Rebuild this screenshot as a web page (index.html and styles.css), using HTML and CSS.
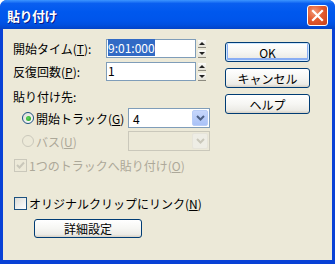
FILE: index.html
```html
<!DOCTYPE html>
<html lang="ja">
<head>
    <meta charset="UTF-8">
    <title>貼り付け</title>
    <link rel="stylesheet" href="styles.css">
</head>
<body>
    <div class="window">
        <div class="titlebar">
            <span class="title">貼り付け</span>
            <div class="close">
                <svg width="13" height="13" viewBox="0 0 13 13">
                    <path d="M2 2 L11 11 M11 2 L2 11" stroke="#fff" stroke-width="2.2" stroke-linecap="square"/>
                </svg>
            </div>
        </div>

        <div class="client">
            <div class="left">
                <div class="field-row first">
                    <span class="field-label">開始タイム(<u>T</u>):</span>
                    <div class="textbox"><span class="selected">9:01:000</span></div>
                    <div class="spin">
                        <span class="spin-btn"><i class="arrow-up"></i></span>
                        <span class="spin-btn"><i class="arrow-down"></i></span>
                    </div>
                </div>
                <div class="field-row second">
                    <span class="field-label">反復回数(<u>P</u>):</span>
                    <div class="textbox">1</div>
                    <div class="spin">
                        <span class="spin-btn"><i class="arrow-up"></i></span>
                        <span class="spin-btn"><i class="arrow-down"></i></span>
                    </div>
                </div>

                <div class="group-label">貼り付け先:</div>

                <div class="radio-row first-radio">
                    <span class="radio checked"></span>
                    <span class="radio-text">開始トラック(<u>G</u>)</span>
                    <div class="combo">
                        <span class="combo-value">4</span>
                        <span class="combo-btn">
                            <svg width="9" height="6" viewBox="0 0 9 6"><path d="M1 1 L4.5 4.5 L8 1" fill="none" stroke="#4d6185" stroke-width="2"/></svg>
                        </span>
                    </div>
                </div>
                <div class="radio-row second-radio disabled">
                    <span class="radio"></span>
                    <span class="radio-text">バス(<u>U</u>)</span>
                    <div class="combo">
                        <span class="combo-value"></span>
                        <span class="combo-btn">
                            <svg width="9" height="6" viewBox="0 0 9 6"><path d="M1 1 L4.5 4.5 L8 1" fill="none" stroke="#c9c7ba" stroke-width="2"/></svg>
                        </span>
                    </div>
                </div>

                <div class="check-row single disabled">
                    <span class="checkbox">
                        <svg width="9" height="9" viewBox="0 0 9 9"><path d="M1 4 L3.5 6.5 L8 1.5" fill="none" stroke="#c9c7ba" stroke-width="2"/></svg>
                    </span>
                    <span class="check-text">1つのトラックへ貼り付け(<u>O</u>)</span>
                </div>

                <div class="check-row link">
                    <span class="checkbox"></span>
                    <span class="check-text">オリジナルクリップにリンク(<u>N</u>)</span>
                </div>

                <div class="detail-row">
                    <button class="btn detail">詳細設定</button>
                </div>
            </div>

            <div class="right">
                <button class="btn default">OK</button>
                <button class="btn">キャンセル</button>
                <button class="btn">ヘルプ</button>
            </div>
        </div>
    </div>
</body>
</html>
```

FILE: styles.css
```css
*{
    margin: 0;
    padding: 0;
    box-sizing: border-box;
}

:root{
    --face: #ece9d8;
    --text: #000;
    --disabled: #aca899;
    --disabledBorder: #cac8bb;
    --xpBorder: #003c74;
    --inputBorder: #7f9db9;
    --frame: #0841d6;
}

body{
    background-color: #fff;
    font-family: "Noto Sans CJK JP", "Noto Sans", sans-serif;
    font-size: 12px;
    color: var(--text);
}

.window{
    width: 335px;
    height: 264px;
    display: flex;
    flex-direction: column;
    background-color: var(--frame);
    border-radius: 7px 7px 0 0;
    overflow: hidden;
}

.titlebar{
    height: 29px;
    flex-shrink: 0;
    display: flex;
    align-items: center;
    justify-content: space-between;
    padding: 0 7px 0 7px;
    background: linear-gradient(to bottom, #3d95ff 0%, #0a5ff0 12%, #0058ee 40%, #0055eb 70%, #0050e0 85%, #0343c8 100%);
}

.title{
    color: #fff;
    font-weight: bold;
    font-size: 13px;
    letter-spacing: -0.5px;
    text-shadow: 1px 1px 0 #0a1883;
    margin-top: 1px;
}

.close{
    width: 21px;
    height: 21px;
    margin-top: 1px;
    border: 1px solid #fff;
    border-radius: 3px;
    display: flex;
    align-items: center;
    justify-content: center;
    background: radial-gradient(circle at 35% 30%, #f29a7a 0%, #e35a2e 45%, #c8401a 100%);
}

.client{
    flex: 1;
    display: flex;
    margin: 0 3px 4px 3px;
    padding-left: 10px;
    background-color: var(--face);
}

.left{
    width: 212px;
    display: flex;
    flex-direction: column;
}

.right{
    width: 85px;
    display: flex;
    flex-direction: column;
    gap: 6px;
    padding-top: 13px;
}

/* text fields */
.field-row{
    display: flex;
    align-items: center;
    height: 19px;
}
.field-row.first{ margin-top: 10px; }
.field-row.second{ margin-top: 4px; }

.field-label{
    width: 93px;
}

.textbox{
    width: 90px;
    height: 19px;
    border: 1px solid var(--inputBorder);
    background-color: #fff;
    padding-left: 1px;
    line-height: 16px;
}

.selected{
    background-color: #316ac5;
    color: #fff;
}

.spin{
    margin-left: 2px;
    width: 8px;
    height: 18px;
    display: flex;
    flex-direction: column;
    gap: 2px;
}

.spin-btn{
    flex: 1;
    display: flex;
    align-items: center;
    justify-content: center;
    background: linear-gradient(to bottom, #fbfbf9, #e3e1d6);
    border-bottom: 1px solid #8d8b80;
}

.arrow-up, .arrow-down{
    width: 0;
    height: 0;
    border-left: 3px solid transparent;
    border-right: 3px solid transparent;
}
.arrow-up{ border-bottom: 3px solid #222; }
.arrow-down{ border-top: 3px solid #222; }

.group-label{
    margin-top: 9px;
    height: 14px;
    line-height: 14px;
}

/* radio rows */
.radio-row{
    display: flex;
    align-items: center;
    height: 20px;
    padding-left: 9px;
}
.first-radio{ margin-top: 4px; }
.second-radio{ margin-top: 3px; }

.radio{
    width: 12px;
    height: 12px;
    border-radius: 50%;
    border: 1px solid #1c5180;
    background: linear-gradient(135deg, #dcdcd7, #fff);
    display: flex;
    align-items: center;
    justify-content: center;
}
.radio.checked::after{
    content: "";
    width: 5px;
    height: 5px;
    border-radius: 50%;
    background: radial-gradient(circle at 40% 40%, #5ed65e, #1a9a1a);
}

.radio-text{
    width: 92px;
    margin-left: 2px;
}

.combo{
    width: 82px;
    height: 20px;
    border: 1px solid var(--inputBorder);
    background-color: #fff;
    display: flex;
    align-items: center;
    justify-content: space-between;
    padding: 1px;
}
.combo-value{
    padding-left: 3px;
}
.combo-btn{
    width: 16px;
    height: 16px;
    border-radius: 2px;
    display: flex;
    align-items: center;
    justify-content: center;
    background: linear-gradient(to bottom, #c6d7fc, #a9c2f7);
    border: 1px solid #b8cdf7;
}

.disabled{
    color: var(--disabled);
}
.disabled .radio{
    border-color: var(--disabledBorder);
    background: var(--face);
}
.disabled .combo{
    border-color: var(--disabledBorder);
    background-color: var(--face);
}
.disabled .combo-btn{
    background: #eeede5;
    border-color: #e6e4da;
}

/* check rows */
.check-row{
    display: flex;
    align-items: center;
    height: 13px;
    padding-left: 1px;
}
.check-row.single{ margin-top: 8px; }
.check-row.link{ margin-top: 25px; }

.checkbox{
    width: 13px;
    height: 13px;
    border: 1px solid #1c5180;
    background: linear-gradient(135deg, #dcdcd7, #fff);
    display: flex;
    align-items: center;
    justify-content: center;
}
.disabled .checkbox{
    border-color: var(--disabledBorder);
    background: var(--face);
}

.check-text{
    margin-left: 2px;
}

/* buttons */
.detail-row{
    margin-top: 9px;
    padding-left: 21px;
}

.btn{
    height: 20px;
    width: 85px;
    border: 1px solid var(--xpBorder);
    border-radius: 3px;
    background: linear-gradient(to bottom, #fff 0%, #f6f6f3 50%, #ecebe6 85%, #d6d0c5 100%);
    font-family: inherit;
    font-size: 12px;
    color: var(--text);
    display: flex;
    align-items: center;
    justify-content: center;
}

.btn.default{
    box-shadow: inset 0 0 0 1px #cee7ff, inset 0 -1px 0 2px #89adf3;
}

.btn.detail{
    width: 108px;
    height: 19px;
}
```
